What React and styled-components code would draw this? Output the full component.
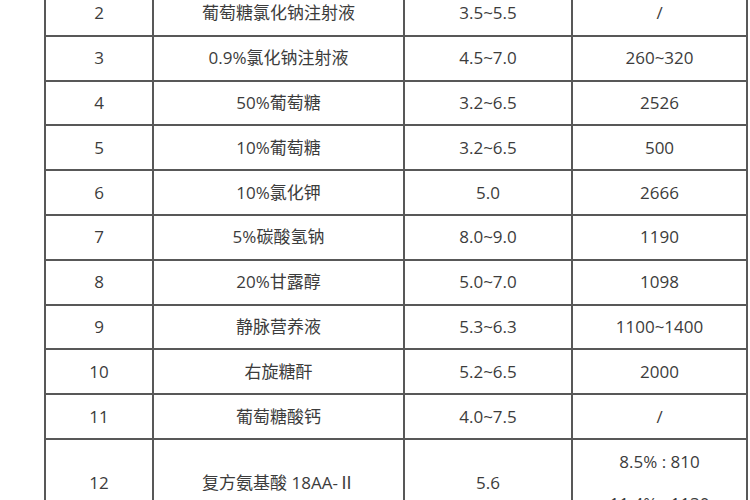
import React from "react";
import styled, { createGlobalStyle } from "styled-components";

const GlobalStyle = createGlobalStyle`
  html, body {
    margin: 0;
    padding: 0;
    background: #ffffff;
  }
  body {
    font-family: "Open Sans", "Noto Sans CJK SC", sans-serif;
  }
`;

const rows = [
  { no: "2", name: "葡萄糖氯化钠注射液", ph: "3.5~5.5", osm: ["/"] },
  { no: "3", name: "0.9%氯化钠注射液", ph: "4.5~7.0", osm: ["260~320"] },
  { no: "4", name: "50%葡萄糖", ph: "3.2~6.5", osm: ["2526"] },
  { no: "5", name: "10%葡萄糖", ph: "3.2~6.5", osm: ["500"] },
  { no: "6", name: "10%氯化钾", ph: "5.0", osm: ["2666"] },
  { no: "7", name: "5%碳酸氢钠", ph: "8.0~9.0", osm: ["1190"] },
  { no: "8", name: "20%甘露醇", ph: "5.0~7.0", osm: ["1098"] },
  { no: "9", name: "静脉营养液", ph: "5.3~6.3", osm: ["1100~1400"] },
  { no: "10", name: "右旋糖酐", ph: "5.2~6.5", osm: ["2000"] },
  { no: "11", name: "葡萄糖酸钙", ph: "4.0~7.5", osm: ["/"] },
  {
    no: "12",
    name: "复方氨基酸 18AA-Ⅱ",
    ph: "5.6",
    osm: ["8.5% : 810", "11.4% : 1130"],
    tall: true,
  },
];

function App() {
  return (
    <>
      <GlobalStyle />
      <Page>
        <Table>
          <colgroup>
            <col style={{ width: 108 }} />
            <col style={{ width: 251 }} />
            <col style={{ width: 168 }} />
            <col style={{ width: 175 }} />
          </colgroup>
          <tbody>
            {rows.map((r) => (
              <Row key={r.no} tall={r.tall}>
                <Cell>{r.no}</Cell>
                <Cell>{r.name}</Cell>
                <Cell>{r.ph}</Cell>
                <Cell>
                  {r.osm.map((line) => (
                    <CellLine key={line}>{line}</CellLine>
                  ))}
                </Cell>
              </Row>
            ))}
          </tbody>
        </Table>
      </Page>
    </>
  );
}

const Page = styled.div`
  width: 750px;
  height: 500px;
  overflow: hidden;
  background: #ffffff;
`;

const Table = styled.table`
  border-collapse: collapse;
  table-layout: fixed;
  width: 704px;
  margin: -10px 0 0 44px;
  color: #3c3c3c;
  font-size: 17px;
`;

const Row = styled.tr`
  height: ${(p) => (p.tall ? "89px" : "44.8px")};
`;

const Cell = styled.td`
  border: 2px solid #585858;
  padding: 0;
  text-align: center;
  vertical-align: middle;
  line-height: 24px;
`;

const CellLine = styled.div`
  & + & {
    margin-top: 18px;
  }
`;

export default App;
